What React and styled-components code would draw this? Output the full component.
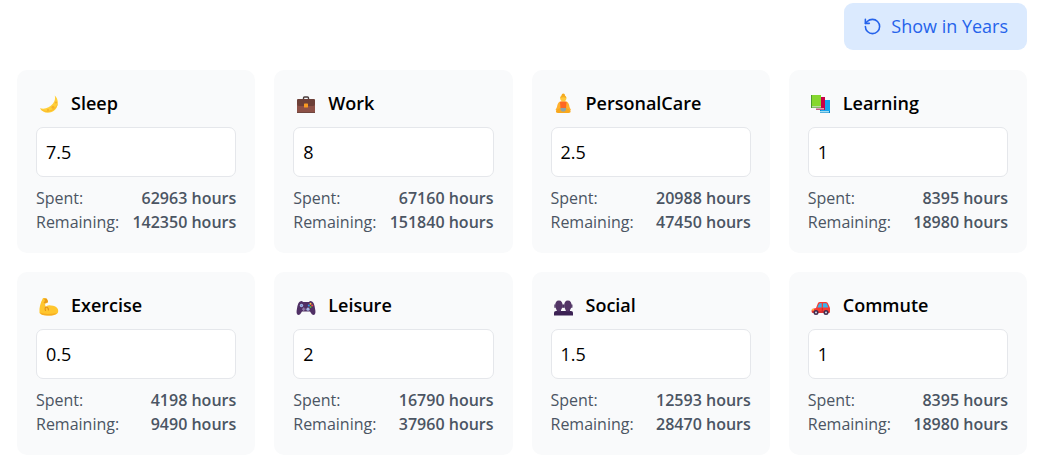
import React, { useState } from 'react';
import styled, { createGlobalStyle } from 'styled-components';
import { RotateCcw } from 'lucide-react';

const GlobalStyle = createGlobalStyle`
    *{
        box-sizing:border-box;
    }

    body{
        margin:0;
        background-color:white;
        color:black;
        font-family:"Open Sans", "Noto Sans", sans-serif;
    }
`;

const Page = styled.main`
    padding:3px 23px 16px 17px;
`;

const Toolbar = styled.div`
    display:flex;
    justify-content:flex-end;
    margin-bottom:20px;
`;

const UnitButton = styled.button`
    display:flex;
    align-items:center;
    gap:9px;
    padding:10px 19px;
    border:0;
    border-radius:9px;
    background-color:#dbeafe;
    color:#2563eb;
    font-family:inherit;
    font-size:18px;
    line-height:27px;
    cursor:pointer;

    &:hover{
        background-color:#bfdbfe;
    }
`;

const Grid = styled.div`
    display:grid;
    grid-template-columns:repeat(4, minmax(0, 1fr));
    gap:19px;
`;

const Card = styled.section`
    padding:19px;
    border-radius:10px;
    background-color:#f9fafb;
`;

const Title = styled.label`
    display:flex;
    align-items:center;
    gap:11px;
    margin-bottom:10px;
    font-size:18px;
    font-weight:600;
    line-height:28px;
`;

const Glyph = styled.svg`
    width:24px;
    height:24px;
    flex:none;
`;

const HoursInput = styled.input`
    display:block;
    width:100%;
    height:50px;
    margin-bottom:9px;
    padding:0 9px;
    border:1px solid #e5e7eb;
    border-radius:7px;
    background-color:white;
    color:black;
    font-family:inherit;
    font-size:18px;
    appearance:textfield;

    &::-webkit-inner-spin-button{
        appearance:none;
    }
`;

const Stats = styled.dl`
    margin:0;
    color:#4b5563;
    font-size:16px;
    line-height:24px;
`;

const StatLine = styled.div`
    display:flex;
    justify-content:space-between;
    white-space:nowrap;
`;

const StatValue = styled.dd`
    margin:0;
    font-weight:600;
`;

const drawings = {
    moon: (
        <>
            <path d="M18.800 4.500C22.500 8 23 14.500 19.300 18.500C15 23 7 23 4 17.300C9 18.800 13.800 16.500 16.800 12.800C19 10 19.500 7.500 18.800 4.500Z" fill="#ffcf3a" />
            <path d="M22 12C21.500 20 9 24.500 4 17.300C10 22.500 19 19.500 22 12Z" fill="#fbbd2c" />
            <circle cx="17" cy="16.300" r="1.500" fill="#f6b12a" />
            <circle cx="12" cy="19" r="1.100" fill="#f6b12a" />
            <circle cx="20" cy="11.500" r="1.100" fill="#f6b12a" />
        </>
    ),
    briefcase: (
        <>
            <path d="M10.500 9V7Q10.500 6 11.500 6H14.500Q15.500 6 15.500 7V9" fill="none" stroke="#493b3b" strokeWidth="1.400" />
            <rect x="4" y="9" width="18" height="13" rx="1" fill="#8d5147" />
            <path d="M4 9Q4 8 5 8H21Q22 8 22 9V13Q22 15 20 15H6Q4 15 4 13Z" fill="#6d4038" />
            <rect x="4" y="21" width="18" height="1" fill="#70463f" />
            <rect x="11" y="12.500" width="4" height="4" rx=".6" fill="#f99a22" />
        </>
    ),
    lotus: (
        <>
            <path d="M9 10.500Q6.500 11.500 6 16L4.500 19L9 20H15.500L20 19L18.500 16Q18 11.500 15.500 10.500Z" fill="#ffb02e" />
            <path d="M9 11Q12.200 9.500 15.500 11L15 17.500H9.500Z" fill="#ff6723" />
            <path d="M9 17L5 19.500Q4.500 22 7 22H17.500Q20 22 19.500 19.500L15.500 17Z" fill="#f8a81d" />
            <path d="M9.500 17H15V19L13.500 20.500H11L9.500 19Z" fill="#8fa2a6" />
            <circle cx="12.300" cy="7.300" r="3.100" fill="#ffc83d" />
            <circle cx="12.300" cy="4.300" r="1.700" fill="#f5a91e" />
            <path d="M9.300 7Q9.500 4.500 12.300 4.500T15.300 7Q12.300 5.500 9.300 7Z" fill="#f5ad22" />
        </>
    ),
    books: (
        <>
            <rect x="12" y="9" width="10" height="13" fill="#0084ce" />
            <rect x="13" y="9" width="9" height="11" fill="#16a5ee" />
            <rect x="12" y="20" width="9" height="1.500" fill="#a5dced" />
            <rect x="8" y="6" width="9" height="13" fill="#ad1457" />
            <rect x="9" y="6" width="8" height="11" fill="#c90047" />
            <rect x="8" y="17" width="8" height="1.500" fill="#dc9db5" />
            <rect x="3" y="4" width="10" height="13" fill="#4b9b30" />
            <rect x="4" y="4" width="9" height="11" fill="#86d72f" />
            <rect x="4" y="15" width="9" height="1.500" fill="#b8d8a5" />
        </>
    ),
    arm: (
        <>
            <path d="M7 5Q9 4.500 11 6L12 9Q12 10 9 10.500L9.500 14Q11.500 11.500 15 12.500C21 13 23 16 22 19.500Q20.500 23 12 22.500Q5 22.500 3.500 20C3 14 4.500 10 7 5Z" fill="#ffc62e" />
            <path d="M8 5.500H10.500Q12 7 12 9L9 10.500L7.500 9.500L9 8Z" fill="#e99b1a" />
            <path d="M9.500 14Q8.700 16 9.500 17.500M9.500 14Q12.500 14 12.500 17" fill="none" stroke="#e3921c" strokeWidth="1.100" strokeLinecap="round" />
            <path d="M4 19.500Q9 22 21 20Q18 23 11 22.500Q5 22.500 4 19.500Z" fill="#f6ac22" />
        </>
    ),
    gamepad: (
        <>
            <path d="M7 8.500Q9 7.500 10 9H16Q17 7.500 19 8.500Q21 9 22 15.500Q23.500 22 20.500 22Q19 22 17 18.500H9Q7 22 5.500 22Q2.500 22 4 15.500Q5 9 7 8.500Z" fill="#503065" />
            <circle cx="8.500" cy="12.500" r="1.700" fill="#a9b9e5" />
            <circle cx="8.500" cy="12.500" r=".7" fill="#718bd0" />
            <path d="M10.700 14.500V18M9 16.200H12.500" stroke="#9580aa" strokeWidth="1.200" />
            <circle cx="15" cy="16.200" r="1.600" fill="#a9b9e5" />
            <circle cx="17.500" cy="10.700" r="1" fill="#ffbc35" />
            <circle cx="17.500" cy="14" r="1" fill="#59b833" />
            <circle cx="15.800" cy="12.400" r="1" fill="#3298ec" />
            <circle cx="19.200" cy="12.400" r="1" fill="#f04c3d" />
        </>
    ),
    people: (
        <>
            <path d="M3 22.500V19.500Q3 18 5 18H20Q22 18 22 19.500V22.500Z" fill="#3c2254" />
            <path d="M5.800 15H10V18.500H5.800ZM14.800 15H19V18.500H14.800Z" fill="#4b2d64" />
            <path d="M7.900 7.500C10.500 7.500 11.700 9.500 11.500 12.500C11.300 16 9.500 18.300 7.900 18.300S4.500 16 4.300 12.500C4.100 9.500 5.300 7.500 7.900 7.500Z" fill="#533566" />
            <path d="M16.900 7.500C19.500 7.500 20.700 9.500 20.500 12.500C20.300 16 18.500 18.300 16.900 18.300S13.500 16 13.300 12.500C13.100 9.500 14.300 7.500 16.900 7.500Z" fill="#533566" />
            <path d="M4 12V14.300M11.800 12V14.300M13 12V14.300M20.800 12V14.300" stroke="#49305f" strokeWidth="1.300" strokeLinecap="round" />
        </>
    ),
    car: (
        <>
            <path d="M4 16L8 15L10 10Q10.500 9 12 9H18Q19.500 9 20 10.500L22 15V19Q22 20 21 20H5Q3.500 20 3.500 18Z" fill="#f83b32" />
            <path d="M9.300 14.500L11 11Q11.300 10.300 12 10.300H13.700V14.500ZM15 10.300H18Q18.700 10.300 19 11L20.300 14.500H15Z" fill="#39b5ed" />
            <path d="M14.300 15V19M4 19H21" stroke="#bd2734" strokeWidth=".8" />
            <rect x="4" y="16" width="2" height="1.500" rx=".5" fill="#ffc83d" />
            <circle cx="8" cy="19.500" r="2.500" fill="#402b4d" />
            <circle cx="18" cy="19.500" r="2.500" fill="#402b4d" />
            <circle cx="8" cy="19.500" r="1" fill="#d8d7e3" />
            <circle cx="18" cy="19.500" r="1" fill="#d8d7e3" />
        </>
    ),
};

const activities = [
    { name: 'Sleep', icon: 'moon', daily: '7.5', spent: 62963, remaining: 142350 },
    { name: 'Work', icon: 'briefcase', daily: '8', spent: 67160, remaining: 151840 },
    { name: 'PersonalCare', icon: 'lotus', daily: '2.5', spent: 20988, remaining: 47450 },
    { name: 'Learning', icon: 'books', daily: '1', spent: 8395, remaining: 18980 },
    { name: 'Exercise', icon: 'arm', daily: '0.5', spent: 4198, remaining: 9490 },
    { name: 'Leisure', icon: 'gamepad', daily: '2', spent: 16790, remaining: 37960 },
    { name: 'Social', icon: 'people', daily: '1.5', spent: 12593, remaining: 28470 },
    { name: 'Commute', icon: 'car', daily: '1', spent: 8395, remaining: 18980 },
];

function Activity(props){

    const [daily, setDaily] = useState(props.data.daily);
    const { name, icon, spent, remaining } = props.data;

    // totals are stored for the initial hours per day, so scale from there
    function total(hours){
        const scaled = daily === props.data.daily ? hours : Math.round(hours * daily / props.data.daily);
        return props.years ? (scaled / 8760).toFixed(1) + ' years' : scaled + ' hours';
    }

    return(
        <Card>
            <Title htmlFor={name}>
                <Glyph viewBox="0 0 24 24" aria-hidden="true">{drawings[icon]}</Glyph>
                {name}
            </Title>
            <HoursInput id={name} type="number" min="0" max="24" step="0.5" value={daily} onChange={(e) => setDaily(e.target.value)}/>
            <Stats>
                <StatLine>
                    <dt>Spent:</dt>
                    <StatValue>{total(spent)}</StatValue>
                </StatLine>
                <StatLine>
                    <dt>Remaining:</dt>
                    <StatValue>{total(remaining)}</StatValue>
                </StatLine>
            </Stats>
        </Card>
    );
}

function App(){

    const [years, setYears] = useState(false);

    return(
        <>
            <GlobalStyle/>
            <Page>
                <Toolbar>
                    <UnitButton type="button" onClick={() => setYears(!years)}>
                        <RotateCcw size={19} aria-hidden="true"/>
                        {years ? 'Show in Hours' : 'Show in Years'}
                    </UnitButton>
                </Toolbar>
                <Grid>
                    {activities.map((activity) => (
                        <Activity key={activity.name} data={activity} years={years}/>
                    ))}
                </Grid>
            </Page>
        </>
    );
}

export default App;
